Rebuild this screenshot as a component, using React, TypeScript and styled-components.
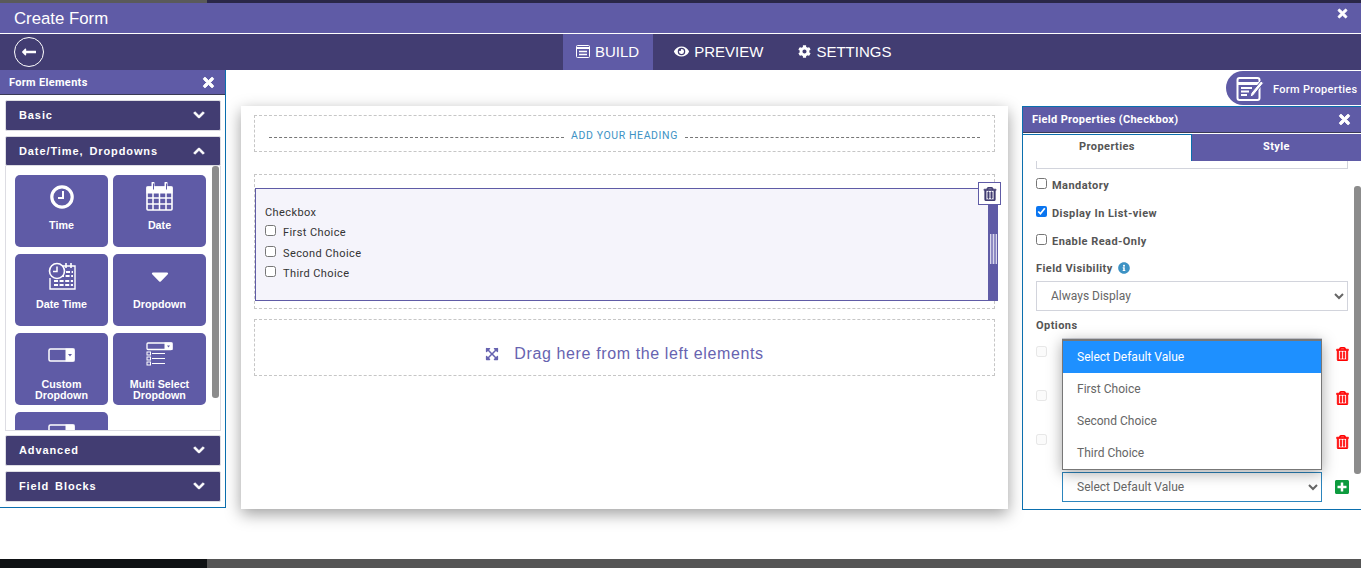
import React from 'react';
import styled, { createGlobalStyle } from 'styled-components';
import {
  FaTimes,
  FaChevronDown,
  FaChevronUp,
  FaCaretDown,
  FaEye,
  FaCog,
  FaRegTrashAlt,
  FaExpandArrowsAlt,
  FaInfoCircle,
  FaPlusSquare,
  FaLongArrowAltLeft,
} from 'react-icons/fa';

const purple = '#5f5ba6';
const navy = '#423d72';
const blue = '#0b6fae';

const GlobalStyle = createGlobalStyle`
  html, body {
    margin: 0;
    height: 100%;
    overflow: hidden;
    background: #fff;
    font-family: "Liberation Sans", Arial, sans-serif;
  }
  * { box-sizing: border-box; }
`;

const Page = styled.div`
  width: 1361px;
  height: 568px;
  display: flex;
  flex-direction: column;
  overflow: hidden;
`;

const Strip = styled.div<{ $left: string; $right: string; $height: number }>`
  height: ${(p) => p.$height}px;
  flex: none;
  background: linear-gradient(to right, ${(p) => p.$left} 207px, ${(p) => p.$right} 207px);
`;

const TitleBar = styled.div`
  height: 31px;
  flex: none;
  background: ${purple};
  border-bottom: 1px solid #fff;
  display: flex;
  align-items: center;
  justify-content: space-between;
  padding: 1px 12px 0 14px;
  color: #fff;
  font-size: 16.8px;
`;

const TitleClose = styled.span`
  display: flex;
  font-size: 13px;
  margin-top: -11px;
  svg { stroke: currentColor; stroke-width: 30px; }
`;

const NavBar = styled.div`
  height: 36px;
  flex: none;
  background: ${navy};
  display: flex;
  align-items: center;
  padding-left: 14px;
`;

const BackButton = styled.div`
  width: 30px;
  height: 30px;
  border: 1px solid #fff;
  border-radius: 50%;
  color: #fff;
  display: flex;
  align-items: center;
  justify-content: center;
  font-size: 16px;
`;

const NavTabs = styled.div`
  display: flex;
  height: 36px;
  margin-left: 519px;
`;

const NavTab = styled.div<{ $active?: boolean; $gap?: number }>`
  display: flex;
  align-items: center;
  gap: 5px;
  padding: 0 ${(p) => (p.$active ? 14 : 0)}px 2px ${(p) => (p.$active ? 13 : 0)}px;
  margin-left: ${(p) => p.$gap || 0}px;
  background: ${(p) => (p.$active ? purple : 'transparent')};
  color: #fff;
  font-size: 15px;
`;

const Main = styled.div`
  flex: 1;
  display: flex;
  align-items: flex-start;
  min-height: 0;
`;

const LeftPanel = styled.aside`
  width: 226px;
  height: 438px;
  flex: none;
  border-right: 1px solid ${blue};
  border-bottom: 1px solid ${blue};
  display: flex;
  flex-direction: column;
`;

const PanelHeader = styled.div<{ $height: number }>`
  height: ${(p) => p.$height}px;
  flex: none;
  background: ${purple};
  border-bottom: 1px solid #3a3a55;
  color: #fff;
  font-family: Roboto, sans-serif;
  font-weight: 700;
  font-size: 11px;
  letter-spacing: 0.32px;
  display: flex;
  align-items: center;
  justify-content: space-between;
  padding: 0 9px 0 9px;
  svg { font-size: 15px; stroke: currentColor; stroke-width: 30px; }
`;

const Accordion = styled.div<{ $top: number; $open?: boolean }>`
  margin: ${(p) => p.$top}px 4px 0 5px;
  height: ${(p) => (p.$open ? 30 : 31)}px;
  flex: none;
  background: ${navy};
  border: 1px solid #dddde3;
  border-radius: 2px;
  display: flex;
  align-items: center;
  justify-content: space-between;
  padding: 0 15px ${(p) => (p.$open ? 1 : 2)}px 13px;
  color: #fff;
  font-size: 11px;
  font-weight: 700;
  letter-spacing: 0.9px;
  word-spacing: 2px;
  svg { font-size: 12px; stroke: currentColor; stroke-width: 40px; }
`;

const AccordionBody = styled.div`
  position: relative;
  margin: 0 4px 0 5px;
  height: 265px;
  flex: none;
  overflow: hidden;
  border: 1px solid #dddde3;
  border-top: 0;
  padding: 9px 0 0 9px;
`;

const TileGrid = styled.div`
  display: grid;
  grid-template-columns: 93px 93px;
  grid-auto-rows: 72px;
  column-gap: 5px;
  row-gap: 7px;
`;

const Tile = styled.div`
  background: ${purple};
  border-radius: 5px;
  color: #fff;
  font-size: 10.7px;
  font-weight: 700;
  line-height: 11px;
  text-align: center;
  display: flex;
  flex-direction: column;
  align-items: center;
  padding-top: 7px;
`;

const TileIcon = styled.div<{ $lift?: number; $below?: number }>`
  height: 29px;
  display: flex;
  align-items: center;
  justify-content: center;
  margin-top: ${(p) => -(p.$lift || 0)}px;
  margin-bottom: ${(p) => p.$below || 9}px;
  color: #fff;
  svg { display: block; }
`;

const Thumb = styled.div<{ $top: number; $height: number; $right: number }>`
  position: absolute;
  top: ${(p) => p.$top}px;
  right: ${(p) => p.$right}px;
  width: 7px;
  height: ${(p) => p.$height}px;
  background: #8c8c8c;
  border-radius: 3px;
`;

const Canvas = styled.section`
  width: 767px;
  height: 403px;
  flex: none;
  margin: 36px 14px 0 15px;
  padding: 9px 13px 0;
  background: #fff;
  box-shadow: 0 5px 15px rgba(0, 0, 0, 0.38);
`;

const HeadingBox = styled.div`
  height: 37px;
  border: 1px dashed #c6c6c6;
  display: flex;
  align-items: center;
  padding: 4px 14px 0;
  gap: 7px;
  color: #3d92c4;
  font-family: Roboto, sans-serif;
  font-size: 10.5px;
  letter-spacing: 0.6px;
`;

const HeadingRule = styled.span`
  flex: 1;
  margin-top: 4px;
  border-top: 1px dashed #777;
`;

const DropZone = styled.div`
  position: relative;
  margin-top: 22px;
  height: 135px;
  border: 1px dashed #c6c6c6;
  padding-top: 13px;
`;

const FieldCard = styled.div`
  position: relative;
  width: 743px;
  height: 113px;
  background: #f5f4fb;
  border: 1px solid ${purple};
  padding: 12px 9px;
  font-family: Roboto, sans-serif;
  font-size: 11px;
  letter-spacing: 0.4px;
  color: #333;
`;

const FieldCaption = styled.div`
  line-height: 23px;
  height: 21px;
`;

const ChoiceRow = styled.label<{ $height: number }>`
  display: flex;
  align-items: center;
  gap: 7px;
  height: ${(p) => p.$height}px;
`;

const Box = styled.input`
  width: 11px;
  height: 11px;
  margin: -4px 0 0;
  flex: none;
  accent-color: #0a75f0;
`;

const Handle = styled.div`
  position: absolute;
  right: -1px;
  top: 16px;
  bottom: 0;
  width: 10px;
  background: ${purple};
  display: flex;
  align-items: center;
  justify-content: center;
`;

const Grip = styled.span`
  width: 7px;
  height: 30px;
  margin-top: -7px;
  background: repeating-linear-gradient(to right, #d9d8ec 0 1px, #8f8cc4 1px 3px);
`;

const TrashBox = styled.div`
  position: absolute;
  top: -7px;
  right: -4px;
  width: 23px;
  height: 23px;
  background: #fff;
  border: 1px solid ${purple};
  color: ${navy};
  display: flex;
  align-items: center;
  justify-content: center;
  font-size: 14px;
  svg { stroke: currentColor; stroke-width: 25px; }
`;

const DragBox = styled.div`
  margin-top: 10px;
  height: 57px;
  border: 1px dashed #c6c6c6;
  display: flex;
  align-items: center;
  justify-content: center;
  gap: 15px;
  padding-top: 12px;
  color: #6763b0;
  font-size: 16px;
  letter-spacing: 0.62px;
`;

const RightColumn = styled.div`
  width: 339px;
  flex: none;
  display: flex;
  flex-direction: column;
`;

const PropsPill = styled.div`
  align-self: flex-end;
  width: 135px;
  height: 34px;
  margin-top: 1px;
  padding: 1px 0 0 10px;
  background: ${purple};
  border-radius: 17px 0 0 17px;
  color: #fff;
  font-family: Roboto, sans-serif;
  font-weight: 500;
  font-size: 11px;
  letter-spacing: 0.32px;
  display: flex;
  align-items: center;
  gap: 9px;
  white-space: nowrap;
`;

const PillLabel = styled.span`
  margin-top: 1px;
`;

const RightPanel = styled.aside`
  position: relative;
  margin-top: 1px;
  height: 404px;
  border: 1px solid ${blue};
  border-right: 0;
  display: flex;
  flex-direction: column;
`;

const TabRow = styled.div`
  display: flex;
  height: 27px;
  flex: none;
  margin-top: 1px;
`;

const PropTab = styled.div<{ $active?: boolean }>`
  flex: ${(p) => (p.$active ? '0 0 169px' : 1)};
  background: ${(p) => (p.$active ? '#fff' : purple)};
  color: ${(p) => (p.$active ? '#555' : '#fff')};
  border-top: ${(p) => (p.$active ? `1px solid ${blue}` : '0')};
  border-right: ${(p) => (p.$active ? `1px solid ${blue}` : '0')};
  font-family: Roboto, sans-serif;
  font-weight: 700;
  font-size: 11px;
  letter-spacing: 0.4px;
  padding-bottom: 3px;
  display: flex;
  align-items: center;
  justify-content: center;
`;

const PropBody = styled.div`
  flex: 1;
  padding: 0 13px;
  width: 338px;
  font-family: Roboto, sans-serif;
  color: #555;
`;

const ClippedField = styled.div`
  height: 8px;
  border: 1px solid #d2d4dc;
  border-top: 0;
  margin-bottom: 9px;
`;

const CheckRow = styled.label`
  display: flex;
  align-items: center;
  gap: 5px;
  height: 14px;
  margin-bottom: 14px;
  font-size: 11px;
  font-weight: 700;
  letter-spacing: 0.45px;
`;

const FieldLabel = styled.div<{ $top?: number; $bottom: number }>`
  display: flex;
  align-items: center;
  gap: 5px;
  height: 14px;
  margin-top: ${(p) => p.$top || 0}px;
  margin-bottom: ${(p) => p.$bottom}px;
  font-size: 11px;
  font-weight: 700;
  letter-spacing: 0.45px;
  svg { color: #3d92c4; font-size: 12px; }
`;

const Select = styled.select<{ $focus?: boolean }>`
  display: block;
  width: 100%;
  height: 30px;
  padding: 0 10px;
  background: #fff;
  border: 1px solid ${(p) => (p.$focus ? '#2c85bd' : '#d2d4dc')};
  border-radius: 0;
  outline: 0;
  color: #666;
  font-family: Roboto, sans-serif;
  font-size: 12px;
`;

const OptionRow = styled.div<{ $top: number }>`
  display: grid;
  grid-template-columns: 11px 260px 12px;
  column-gap: 15px;
  align-items: center;
  height: 30px;
  margin-top: ${(p) => p.$top}px;
  & > input { opacity: 0.5; }
`;

const OptionInput = styled.div`
  height: 30px;
  border: 1px solid #d2d4dc;
`;

const Trash = styled.span`
  display: flex;
  color: #f00;
  font-size: 14px;
  margin: 2px 0 0 -1px;
  svg { stroke: currentColor; stroke-width: 25px; }
`;

const Plus = styled.span`
  display: flex;
  color: #0d9b3e;
  font-size: 16px;
  margin-left: -2px;
`;

const Popup = styled.div`
  position: absolute;
  top: 232px;
  left: 39px;
  width: 260px;
  height: 131px;
  background: #fff;
  border: 1px solid #777;
  border-top-width: 2px;
  box-shadow: 0 3px 14px rgba(0, 0, 0, 0.35);
  font-family: Roboto, sans-serif;
  font-size: 12px;
  color: #666;
  z-index: 2;
`;

const PopupItem = styled.div<{ $selected?: boolean }>`
  height: 32px;
  display: flex;
  align-items: center;
  padding-left: 14px;
  background: ${(p) => (p.$selected ? '#1e90ff' : '#fff')};
  color: ${(p) => (p.$selected ? '#fff' : '#666')};
`;

const BuildIcon = () => (
  <svg width="14" height="13" viewBox="0 0 14 13" fill="none" stroke="#fff">
    <rect x="0.5" y="0.5" width="13" height="12" rx="1" />
    <path d="M1 3h12" strokeWidth="2" />
    <path d="M3 6.500h8M3 9.500h8" strokeWidth="1.4" />
  </svg>
);

const ClockIcon = () => (
  <svg width="24" height="24" viewBox="0 0 24 24" fill="none" stroke="#fff">
    <circle cx="12" cy="12" r="10.2" strokeWidth="3.2" />
    <path d="M13 6v7H8" strokeWidth="2" />
  </svg>
);

const CalendarIcon = () => (
  <svg width="27" height="29" viewBox="0 0 27 29" fill="none" stroke="#fff">
    <rect x="1" y="5" width="25" height="23" rx="1" strokeWidth="1.6" />
    <rect x="1" y="5" width="25" height="6" fill="#fff" />
    <path d="M7 1v7M20 1v7" strokeWidth="3" strokeLinecap="round" />
    <path d="M7.500 1.500v6M20.500 1.500v6" strokeWidth="1" stroke={purple} />
    <path d="M1 16h25M1 22h25M7 11v17M13.500 11v17M20 11v17" strokeWidth="1.5" />
  </svg>
);

const DateTimeIcon = () => (
  <svg width="28" height="28" viewBox="0 0 28 28" fill="none" stroke="#fff">
    <path d="M12 4h15v23H2V16" strokeWidth="1.4" />
    <path d="M6 19h19M6 23h19M12 14h13M18 10h7" strokeWidth="2.2" strokeDasharray="4 1.6" />
    <path d="M18 1v5M23 1v5" strokeWidth="1.6" />
    <circle cx="9" cy="9" r="7.500" fill={purple} strokeWidth="1.6" />
    <path d="M9 4.500V9.500H5" strokeWidth="1.5" />
  </svg>
);

const DropdownIcon = () => (
  <svg width="27" height="14" viewBox="0 0 27 14" fill="none" stroke="#fff">
    <rect x="1" y="1" width="25" height="12" rx="1.500" strokeWidth="1.5" />
    <rect x="18" y="1" width="8" height="12" fill="#fff" />
    <path d="M20 6h4l-2 2.500z" fill={purple} stroke="none" />
  </svg>
);

const MultiDropdownIcon = () => (
  <svg width="27" height="25" viewBox="0 0 27 25" fill="none" stroke="#fff">
    <rect x="1" y="1" width="25" height="6.500" rx="1" strokeWidth="1.3" />
    <rect x="19" y="1" width="7" height="6.500" fill="#fff" />
    <path d="M21 3.500h3L22.500 5.500z" fill={purple} stroke="none" />
    <rect x="1" y="10" width="3.500" height="3" strokeWidth="1" />
    <rect x="1" y="15" width="3.500" height="3" strokeWidth="1" />
    <rect x="1" y="20" width="3.500" height="3" strokeWidth="1" />
    <path d="M6 11.500h13M6 16.500h13M6 21.500h13" strokeWidth="1.2" />
  </svg>
);

const FormPropsIcon = () => (
  <svg width="28" height="26" viewBox="0 0 28 26" fill="none">
    <rect x="1.500" y="2" width="22" height="22" rx="2" stroke="#fff" strokeWidth="2" />
    <path d="M1.500 7.500h22" stroke="#fff" strokeWidth="3" />
    <path d="M13 4.500h1.500M16.500 4.500H18M20 4.500h1.500" stroke={purple} strokeWidth="1.4" />
    <path d="M5 12h11M5 15.500h8M5 19h6" stroke="#fff" strokeWidth="1.8" />
    <path d="M14 21l1-4L25 5l2.500 2L17 20z" fill="#fff" stroke={purple} strokeWidth="1" />
  </svg>
);

const tiles: { label: React.ReactNode; icon: React.ReactNode; lift?: number; below?: number }[] = [
  { label: 'Time', icon: <ClockIcon /> },
  { label: 'Date', icon: <CalendarIcon /> },
  { label: 'Date Time', icon: <DateTimeIcon /> },
  { label: 'Dropdown', icon: <FaCaretDown size={28} /> },
  { label: <>Custom<br />Dropdown</>, icon: <DropdownIcon />, below: 10 },
  { label: <>Multi Select<br />Dropdown</>, icon: <MultiDropdownIcon />, below: 10 },
  { label: '', icon: <DropdownIcon />, lift: 3 },
];

const choices = [
  { label: 'First Choice', height: 20 },
  { label: 'Second Choice', height: 22 },
  { label: 'Third Choice', height: 18 },
];

const popupOptions = ['First Choice', 'Second Choice', 'Third Choice'];

const App = () => {
  return (
    <Page>
      <GlobalStyle />
      <Strip $left="#5a5a5a" $right="#2a2748" $height={3} />
      <TitleBar>
        <span>Create Form</span>
        <TitleClose><FaTimes /></TitleClose>
      </TitleBar>
      <NavBar>
        <BackButton><FaLongArrowAltLeft /></BackButton>
        <NavTabs>
          <NavTab $active><BuildIcon />BUILD</NavTab>
          <NavTab $gap={21}><FaEye size={15} />PREVIEW</NavTab>
          <NavTab $gap={35}><FaCog size={13} />SETTINGS</NavTab>
        </NavTabs>
      </NavBar>
      <Main>
        <LeftPanel>
          <PanelHeader $height={25}>
            Form Elements
            <FaTimes />
          </PanelHeader>
          <Accordion $top={5}>Basic<FaChevronDown /></Accordion>
          <Accordion $top={5} $open>Date/Time, Dropdowns<FaChevronUp /></Accordion>
          <AccordionBody>
            <TileGrid>
              {tiles.map((tile, i) => (
                <Tile key={i}>
                  <TileIcon $lift={tile.lift} $below={tile.below}>{tile.icon}</TileIcon>
                  {tile.label}
                </Tile>
              ))}
            </TileGrid>
            <Thumb $top={0} $height={232} $right={1} />
          </AccordionBody>
          <Accordion $top={4}>Advanced<FaChevronDown /></Accordion>
          <Accordion $top={5}>Field Blocks<FaChevronDown /></Accordion>
        </LeftPanel>
        <Canvas>
          <HeadingBox>
            <HeadingRule />
            ADD YOUR HEADING
            <HeadingRule />
          </HeadingBox>
          <DropZone>
            <FieldCard>
              <FieldCaption>Checkbox</FieldCaption>
              {choices.map((choice) => (
                <ChoiceRow key={choice.label} $height={choice.height}>
                  <Box type="checkbox" />
                  {choice.label}
                </ChoiceRow>
              ))}
              <Handle><Grip /></Handle>
              <TrashBox><FaRegTrashAlt /></TrashBox>
            </FieldCard>
          </DropZone>
          <DragBox>
            <FaExpandArrowsAlt size={14} />
            Drag here from the left elements
          </DragBox>
        </Canvas>
        <RightColumn>
          <PropsPill><FormPropsIcon /><PillLabel>Form Properties</PillLabel></PropsPill>
          <RightPanel>
            <PanelHeader $height={26}>
              Field Properties (Checkbox)
              <FaTimes />
            </PanelHeader>
            <TabRow>
              <PropTab $active>Properties</PropTab>
              <PropTab>Style</PropTab>
            </TabRow>
            <PropBody>
              <ClippedField />
              <CheckRow><Box type="checkbox" />Mandatory</CheckRow>
              <CheckRow><Box type="checkbox" defaultChecked />Display In List-view</CheckRow>
              <CheckRow><Box type="checkbox" />Enable Read-Only</CheckRow>
              <FieldLabel $top={-1} $bottom={6}>Field Visibility <FaInfoCircle /></FieldLabel>
              <Select defaultValue="always">
                <option value="always">Always Display</option>
              </Select>
              <FieldLabel $top={7} $bottom={6}>Options</FieldLabel>
              {[0, 14, 14].map((top, i) => (
                <OptionRow key={i} $top={top}>
                  <Box type="checkbox" disabled />
                  <OptionInput />
                  <Trash><FaRegTrashAlt /></Trash>
                </OptionRow>
              ))}
              <OptionRow $top={16}>
                <span />
                <Select $focus defaultValue="none">
                  <option value="none">Select Default Value</option>
                </Select>
                <Plus><FaPlusSquare /></Plus>
              </OptionRow>
            </PropBody>
            <Popup>
              <PopupItem $selected>Select Default Value</PopupItem>
              {popupOptions.map((option) => (
                <PopupItem key={option}>{option}</PopupItem>
              ))}
            </Popup>
            <Thumb $top={79} $height={288} $right={0} />
          </RightPanel>
        </RightColumn>
      </Main>
      <Strip $left="#0f1214" $right="#555555" $height={9} />
    </Page>
  );
};

export default App;
